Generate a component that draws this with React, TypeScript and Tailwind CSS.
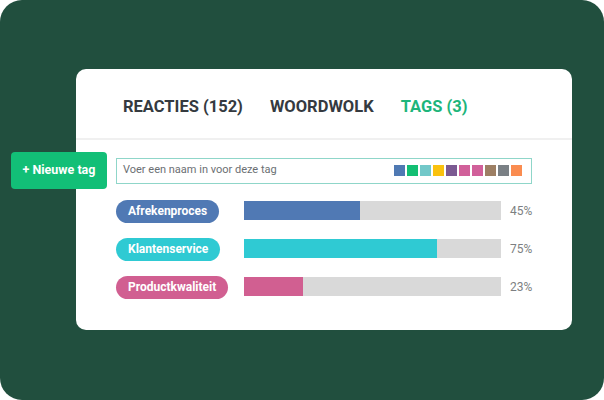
const swatches = [
	"#4f79b3",
	"#13bf73",
	"#72c8c9",
	"#fac20f",
	"#7b5a92",
	"#d1609a",
	"#d1609a",
	"#9d7f64",
	"#7a8085",
	"#fa8c50",
];

const tags = [
	{ name: "Afrekenproces", color: "#5079b4", pct: 45 },
	{ name: "Klantenservice", color: "#2fcad3", pct: 75 },
	{ name: "Productkwaliteit", color: "#d15f91", pct: 23 },
];

export default function App() {
	return (
		<div className="w-[604px] h-[400px] bg-white">
			<div
				className="w-[604px] h-[400px] bg-[#214f3e] rounded-[22px] pt-[69px] pl-[76px]"
				style={{ fontFamily: "Roboto, 'Noto Sans', sans-serif" }}
			>
				<div className="w-[496px] h-[261px] bg-white rounded-[10px]">
					<div className="h-[69px] flex items-center gap-[27px] pl-[47px] pt-[8px] text-[16.5px] font-bold">
						<span className="text-[#353a40]">REACTIES (152)</span>
						<span className="text-[#353a40]">WOORDWOLK</span>
						<span className="text-[#1db57b]">TAGS (3)</span>
					</div>
					<div className="h-[2px] bg-[#f0f0f0]" />
					<div className="flex items-center gap-[9px] -ml-[65px] mt-[12px]">
						<button className="w-[96px] h-[37px] rounded-[4px] bg-[#12bf77] text-white text-[12.5px] font-bold flex items-center justify-center">
							+ Nieuwe tag
						</button>
						<div className="w-[416px] h-[26px] border border-[#8fd6c9] flex items-center justify-between pl-[6px] pr-[9px]">
							<span className="text-[11px] text-[#6b6f73]">Voer een naam in voor deze tag</span>
							<div className="flex gap-[2px]">
								{swatches.map((c, i) => (
									<div key={i} className="w-[11px] h-[11px]" style={{ backgroundColor: c }} />
								))}
							</div>
						</div>
					</div>
					<div className="flex flex-col gap-[15px] mt-[10px] pl-[40px]">
						{tags.map((t) => (
							<div key={t.name} className="flex items-center h-[23px]">
								<div className="w-[128px]">
									<span
										className="inline-flex items-center h-[23px] px-[12px] rounded-full text-white text-[12px] font-bold"
										style={{ backgroundColor: t.color }}
									>
										{t.name}
									</span>
								</div>
								<div className="w-[257px] h-[19px] bg-[#d9d9d9]">
									<div className="h-full" style={{ width: `${t.pct}%`, backgroundColor: t.color }} />
								</div>
								<span className="ml-[9px] text-[12px] text-[#7d7f82]">{t.pct}%</span>
							</div>
						))}
					</div>
				</div>
			</div>
		</div>
	);
}
